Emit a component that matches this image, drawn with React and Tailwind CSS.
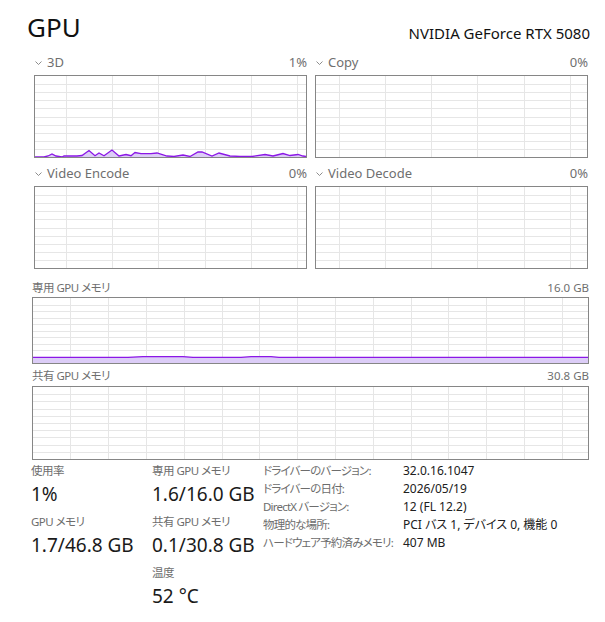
import React from 'react'

const FONT = "font-['Noto_Sans','Noto_Sans_CJK_JP',sans-serif]"
const LINE = '#8b17e6'
const FILL = '#dccdf7'

// 3D usage trace, page coords (inner box starts at x=35, y=76)
const TRACE_3D = [
  [35, 157], [44, 157], [48, 156], [52, 154], [56, 156], [62, 157], [64, 156], [77, 156],
  [82, 155.5], [89, 150.5], [95, 155.7], [99, 153], [104, 155.7], [112, 150], [119, 156],
  [126, 154.5], [131, 155.7], [135, 152.5], [141, 153.7], [151, 153.7], [157, 153], [167, 156],
  [174, 156.5], [183, 155], [190, 156.5], [198, 152], [202, 152], [212, 156], [219, 153],
  [230, 156], [240, 156.5], [252, 156.5], [265, 154.5], [273, 156], [283, 153.5], [290, 155.5],
  [298, 154.5], [303, 156], [306, 156.5],
].map(([x, y]) => [x - 35, y - 76])

const TRACE_MEM = [
  [0, 59.3], [95, 59.3], [110, 58.6], [150, 58.6], [160, 59.3], [208, 59.3], [218, 58.7],
  [238, 58.7], [246, 59.3], [555, 59.3],
]

function Chevron() {
  return (
    <svg width="7" height="4" viewBox="0 0 7 4" className="shrink-0">
      <polyline points="0.5,0.5 3.5,3.5 6.5,0.5" fill="none" stroke="#808080" strokeWidth="0.9" />
    </svg>
  )
}

function Grid({ w, h, offset, step }) {
  const xs = []
  for (let x = offset; x < w; x += step) xs.push(Math.round(x) + 0.5)
  const ys = []
  for (let k = 1; k < 10; k++) ys.push(Math.round((k * h) / 10) + 0.5)
  return (
    <g stroke="#e6e6e6" strokeWidth="1" shapeRendering="crispEdges">
      {ys.map(y => <line key={'h' + y} x1="0" x2={w} y1={y} y2={y} />)}
      {xs.map(x => <line key={'v' + x} x1={x} x2={x} y1="0" y2={h} />)}
    </g>
  )
}

function Trace({ pts, h }) {
  const line = pts.map(p => p.join(',')).join(' ')
  const area = `0,${h} ${line} ${pts[pts.length - 1][0]},${h}`
  return (
    <g>
      <polygon points={area} fill={FILL} />
      <polyline points={line} fill="none" stroke={LINE} strokeWidth="1.3" />
    </g>
  )
}

function Chart({ w, h, offset, step, trace }) {
  return (
    <div className="border border-[#868686] bg-white">
      <svg width={w} height={h} className="block">
        <Grid w={w} h={h} offset={offset} step={step} />
        {trace && <Trace pts={trace} h={h} />}
      </svg>
    </div>
  )
}

function EngineCell({ name, pct, offset, trace }) {
  return (
    <div>
      <div className="h-[22px] pt-[1px] flex items-center justify-between text-[13px] text-[#6f6f6f]">
        <div className="flex items-center gap-[5px] pl-[1px]">
          <Chevron />
          <span>{name}</span>
        </div>
        <span>{pct}</span>
      </div>
      <div className="mt-[2px]">
        <Chart w={271} h={81} offset={offset} step={46.2} trace={trace} />
      </div>
    </div>
  )
}

function Stat({ label, value }) {
  return (
    <div className="mb-[4px]">
      <div className="h-[20px] flex items-center text-[11.5px] tracking-[-0.5px] text-[#6d6d6d]">{label}</div>
      <div className="h-[27px] flex items-center text-[19px] text-[#1a1a1a]">{value}</div>
    </div>
  )
}

const DETAILS = [
  ['ドライバーのバージョン:', '32.0.16.1047'],
  ['ドライバーの日付:', '2026/05/19'],
  ['DirectX バージョン:', '12 (FL 12.2)'],
  ['物理的な場所:', 'PCI バス 1, デバイス 0, 機能 0'],
  ['ハードウェア予約済みメモリ:', '407 MB'],
]

export default function App() {
  return (
    <div className={`w-[605px] h-[622px] bg-white overflow-hidden [font-feature-settings:'palt'] ${FONT}`}>

      {/* Header */}
      <div className="flex items-end justify-between pl-[27px] pr-[15px] pt-[9px] h-[51px]">
        <h1 className="text-[26px] leading-[34px] text-[#111] mb-[7px]">GPU</h1>
        <span className="text-[15px] text-[#111] mb-[7px]">NVIDIA GeForce RTX 5080</span>
      </div>

      {/* Engine charts */}
      <div className="grid grid-cols-[273px_273px] gap-x-[8px] gap-y-[4px] pl-[34px]">
        <EngineCell name="3D" pct="1%" offset={31} trace={TRACE_3D} />
        <EngineCell name="Copy" pct="0%" offset={22.7} />
        <EngineCell name="Video Encode" pct="0%" offset={31} />
        <EngineCell name="Video Decode" pct="0%" offset={22.7} />
      </div>

      {/* Memory charts */}
      <div className="pl-[32px] w-[589px] mt-[8px]">
        <div className="h-[20px] pt-[1px] flex items-center justify-between text-[11.5px] text-[#6f6f6f]">
          <span className="tracking-[-0.5px]">専用 GPU メモリ</span>
          <span>16.0 GB</span>
        </div>
        <Chart w={555} h={65} offset={37.3} step={37.8} trace={TRACE_MEM} />

        <div className="h-[20px] mt-[2px] flex items-center justify-between text-[11.5px] text-[#6f6f6f]">
          <span className="tracking-[-0.5px]">共有 GPU メモリ</span>
          <span>30.8 GB</span>
        </div>
        <Chart w={555} h={72} offset={37.3} step={37.8} />
      </div>

      {/* Stats */}
      <div className="flex mt-[1px]">
        <div className="pl-[31px] w-[152px]">
          <Stat label="使用率" value="1%" />
          <Stat label="GPU メモリ" value="1.7/46.8 GB" />
        </div>
        <div className="w-[111px]">
          <Stat label="専用 GPU メモリ" value="1.6/16.0 GB" />
          <Stat label="共有 GPU メモリ" value="0.1/30.8 GB" />
          <Stat label="温度" value="52 °C" />
        </div>
        <div className="grid grid-cols-[140px_1fr] auto-rows-[18px] items-center pt-[1px]">
          {DETAILS.map(([k, v]) => (
            <React.Fragment key={k}>
              <span className="text-[11.5px] tracking-[-0.8px] text-[#6d6d6d] whitespace-nowrap">{k}</span>
              <span className="text-[12px] text-[#202020] whitespace-nowrap">{v}</span>
            </React.Fragment>
          ))}
        </div>
      </div>
    </div>
  )
}
